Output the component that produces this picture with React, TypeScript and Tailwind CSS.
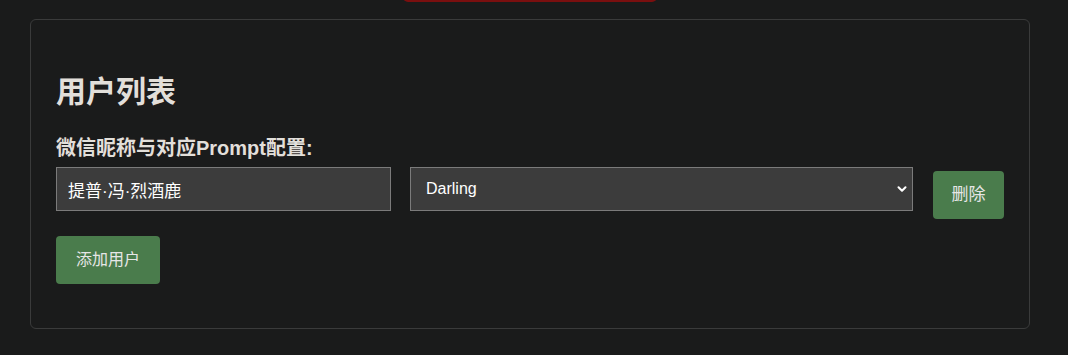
import { ChevronDown } from "lucide-react";

const font = {
  fontFamily: '"Liberation Sans", "Noto Sans CJK SC", sans-serif',
};

export default function App() {
  return (
    <div
      className="relative min-h-[355px] w-full overflow-hidden bg-[#1a1b1b] pt-[19px] text-[#e2dfda]"
      style={font}
    >
      {/* toast peeking from top */}
      <div className="absolute left-[403px] top-[-10px] h-[12px] w-[254px] rounded-b-[5px] bg-[#7a0f0f]" />

      <div className="ml-[30px] h-[310px] w-[1000px] rounded-[6px] border border-[#3a3b3b] px-[25px] pt-[54px]">
        <h2 className="text-[30px] font-bold leading-[36px]">用户列表</h2>

        <p className="mt-[26px] text-[20px] font-bold leading-[24px]">微信昵称与对应Prompt配置:</p>

        <div className="mt-[7px] flex items-start gap-[19px]">
          <input
            defaultValue="提普·冯·烈酒鹿"
            className="h-[44px] w-[335px] border border-[#7b7b7b] bg-[#3c3c3c] px-[11px] text-[17px] text-white outline-none"
          />
          <div className="relative flex-1">
            <select
              defaultValue="Darling"
              className="h-[44px] w-full appearance-none border border-[#7b7b7b] bg-[#3c3c3c] px-[15px] text-[16px] text-white outline-none"
            >
              <option>Darling</option>
            </select>
            <ChevronDown
              className="pointer-events-none absolute right-[4px] top-[15px] h-[14px] w-[14px] text-white"
              strokeWidth={3.5}
            />
          </div>
          <button className="ml-[1px] mt-[4px] h-[48px] w-[71px] shrink-0 rounded-[4px] bg-[#4a7c4c] text-[17px] text-[#e6e6e6]">
            删除
          </button>
        </div>

        <button className="mt-[17px] h-[48px] w-[104px] rounded-[4px] bg-[#4a7c4c] text-[16px] text-[#e6e6e6]">
          添加用户
        </button>
      </div>
    </div>
  );
}
